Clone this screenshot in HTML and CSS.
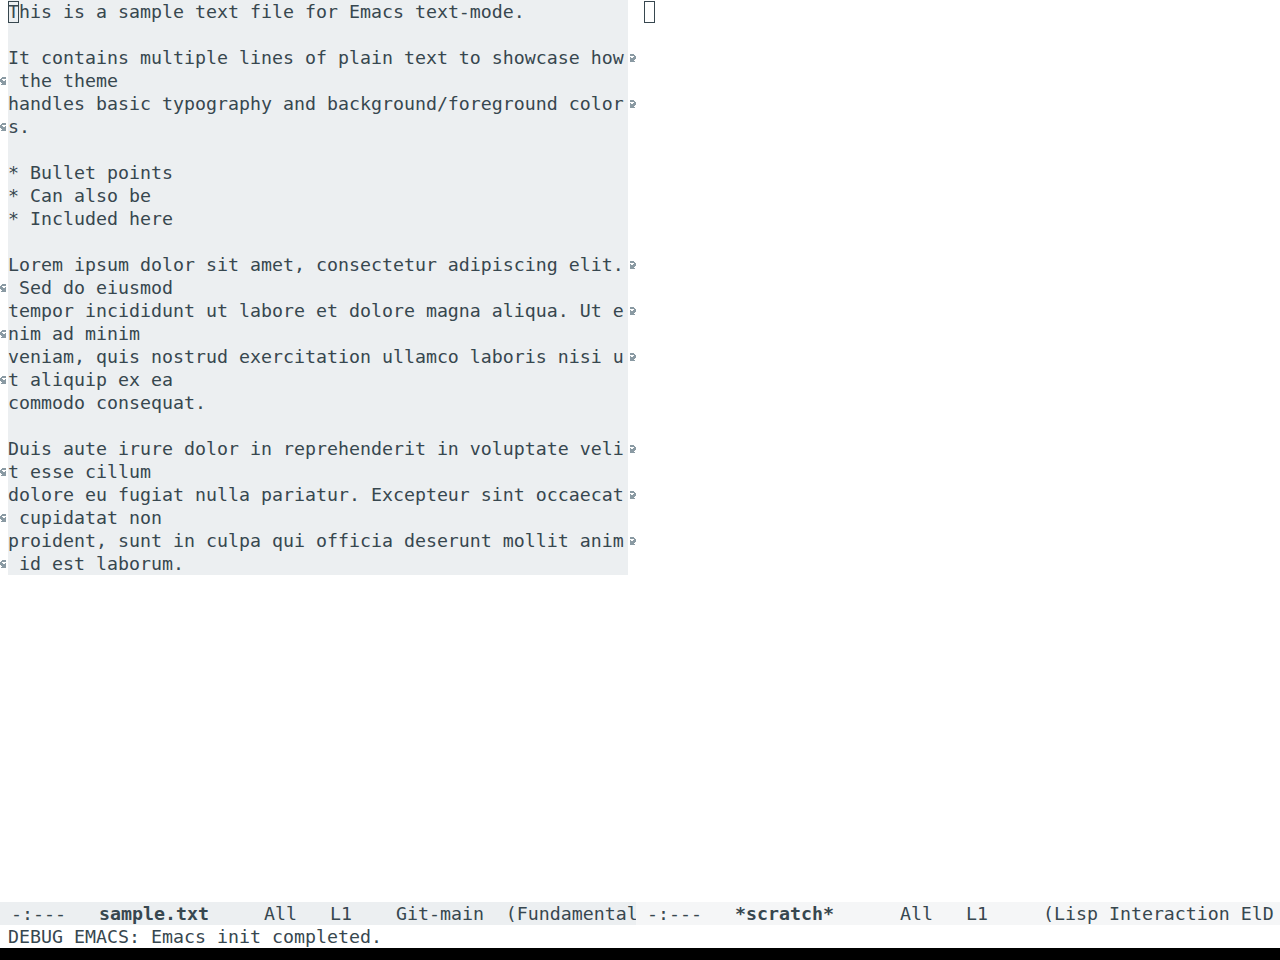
FILE: index.html
```html
<!DOCTYPE html>
<html>
<head>
<meta charset="utf-8">
<link rel="stylesheet" href="styles.css">
</head>
<body>
<div class="frame">
  <div class="windows">
    <div class="win win-left">
      <div class="row"><span class="fringe"></span><span class="text"><span class="cursor">T</span>his is a sample text file for Emacs text-mode.</span><span class="fringe"></span></div>
      <div class="row"><span class="fringe"></span><span class="text"></span><span class="fringe"></span></div>
      <div class="row"><span class="fringe"></span><span class="text">It contains multiple lines of plain text to showcase how</span><span class="fringe"><svg class="arr" viewBox="0 0 8 8" width="8" height="8"><path d="M2 0h4v1H2zM2 1h5v1H2zM6 2h2v1H6zM2 3h1v1H2zM5 3h3v1H5zM2 4h6v1H2zM2 5h5v1H2zM2 6h4v1H2zM2 7h5v1H2z"/></svg></span></div>
      <div class="row"><span class="fringe"><svg class="arr" viewBox="0 0 8 8" width="8" height="8"><path d="M2 0h4v1H2zM1 1h5v1H1zM0 2h2v1H0zM0 3h3v1H0zM5 3h1v1H5zM0 4h6v1H0zM1 5h5v1H1zM2 6h4v1H2zM1 7h5v1H1z"/></svg></span><span class="text"> the theme</span><span class="fringe"></span></div>
      <div class="row"><span class="fringe"></span><span class="text">handles basic typography and background/foreground color</span><span class="fringe"><svg class="arr" viewBox="0 0 8 8" width="8" height="8"><path d="M2 0h4v1H2zM2 1h5v1H2zM6 2h2v1H6zM2 3h1v1H2zM5 3h3v1H5zM2 4h6v1H2zM2 5h5v1H2zM2 6h4v1H2zM2 7h5v1H2z"/></svg></span></div>
      <div class="row"><span class="fringe"><svg class="arr" viewBox="0 0 8 8" width="8" height="8"><path d="M2 0h4v1H2zM1 1h5v1H1zM0 2h2v1H0zM0 3h3v1H0zM5 3h1v1H5zM0 4h6v1H0zM1 5h5v1H1zM2 6h4v1H2zM1 7h5v1H1z"/></svg></span><span class="text">s.</span><span class="fringe"></span></div>
      <div class="row"><span class="fringe"></span><span class="text"></span><span class="fringe"></span></div>
      <div class="row"><span class="fringe"></span><span class="text">* Bullet points</span><span class="fringe"></span></div>
      <div class="row"><span class="fringe"></span><span class="text">* Can also be</span><span class="fringe"></span></div>
      <div class="row"><span class="fringe"></span><span class="text">* Included here</span><span class="fringe"></span></div>
      <div class="row"><span class="fringe"></span><span class="text"></span><span class="fringe"></span></div>
      <div class="row"><span class="fringe"></span><span class="text">Lorem ipsum dolor sit amet, consectetur adipiscing elit.</span><span class="fringe"><svg class="arr" viewBox="0 0 8 8" width="8" height="8"><path d="M2 0h4v1H2zM2 1h5v1H2zM6 2h2v1H6zM2 3h1v1H2zM5 3h3v1H5zM2 4h6v1H2zM2 5h5v1H2zM2 6h4v1H2zM2 7h5v1H2z"/></svg></span></div>
      <div class="row"><span class="fringe"><svg class="arr" viewBox="0 0 8 8" width="8" height="8"><path d="M2 0h4v1H2zM1 1h5v1H1zM0 2h2v1H0zM0 3h3v1H0zM5 3h1v1H5zM0 4h6v1H0zM1 5h5v1H1zM2 6h4v1H2zM1 7h5v1H1z"/></svg></span><span class="text"> Sed do eiusmod</span><span class="fringe"></span></div>
      <div class="row"><span class="fringe"></span><span class="text">tempor incididunt ut labore et dolore magna aliqua. Ut e</span><span class="fringe"><svg class="arr" viewBox="0 0 8 8" width="8" height="8"><path d="M2 0h4v1H2zM2 1h5v1H2zM6 2h2v1H6zM2 3h1v1H2zM5 3h3v1H5zM2 4h6v1H2zM2 5h5v1H2zM2 6h4v1H2zM2 7h5v1H2z"/></svg></span></div>
      <div class="row"><span class="fringe"><svg class="arr" viewBox="0 0 8 8" width="8" height="8"><path d="M2 0h4v1H2zM1 1h5v1H1zM0 2h2v1H0zM0 3h3v1H0zM5 3h1v1H5zM0 4h6v1H0zM1 5h5v1H1zM2 6h4v1H2zM1 7h5v1H1z"/></svg></span><span class="text">nim ad minim</span><span class="fringe"></span></div>
      <div class="row"><span class="fringe"></span><span class="text">veniam, quis nostrud exercitation ullamco laboris nisi u</span><span class="fringe"><svg class="arr" viewBox="0 0 8 8" width="8" height="8"><path d="M2 0h4v1H2zM2 1h5v1H2zM6 2h2v1H6zM2 3h1v1H2zM5 3h3v1H5zM2 4h6v1H2zM2 5h5v1H2zM2 6h4v1H2zM2 7h5v1H2z"/></svg></span></div>
      <div class="row"><span class="fringe"><svg class="arr" viewBox="0 0 8 8" width="8" height="8"><path d="M2 0h4v1H2zM1 1h5v1H1zM0 2h2v1H0zM0 3h3v1H0zM5 3h1v1H5zM0 4h6v1H0zM1 5h5v1H1zM2 6h4v1H2zM1 7h5v1H1z"/></svg></span><span class="text">t aliquip ex ea</span><span class="fringe"></span></div>
      <div class="row"><span class="fringe"></span><span class="text">commodo consequat.</span><span class="fringe"></span></div>
      <div class="row"><span class="fringe"></span><span class="text"></span><span class="fringe"></span></div>
      <div class="row"><span class="fringe"></span><span class="text">Duis aute irure dolor in reprehenderit in voluptate veli</span><span class="fringe"><svg class="arr" viewBox="0 0 8 8" width="8" height="8"><path d="M2 0h4v1H2zM2 1h5v1H2zM6 2h2v1H6zM2 3h1v1H2zM5 3h3v1H5zM2 4h6v1H2zM2 5h5v1H2zM2 6h4v1H2zM2 7h5v1H2z"/></svg></span></div>
      <div class="row"><span class="fringe"><svg class="arr" viewBox="0 0 8 8" width="8" height="8"><path d="M2 0h4v1H2zM1 1h5v1H1zM0 2h2v1H0zM0 3h3v1H0zM5 3h1v1H5zM0 4h6v1H0zM1 5h5v1H1zM2 6h4v1H2zM1 7h5v1H1z"/></svg></span><span class="text">t esse cillum</span><span class="fringe"></span></div>
      <div class="row"><span class="fringe"></span><span class="text">dolore eu fugiat nulla pariatur. Excepteur sint occaecat</span><span class="fringe"><svg class="arr" viewBox="0 0 8 8" width="8" height="8"><path d="M2 0h4v1H2zM2 1h5v1H2zM6 2h2v1H6zM2 3h1v1H2zM5 3h3v1H5zM2 4h6v1H2zM2 5h5v1H2zM2 6h4v1H2zM2 7h5v1H2z"/></svg></span></div>
      <div class="row"><span class="fringe"><svg class="arr" viewBox="0 0 8 8" width="8" height="8"><path d="M2 0h4v1H2zM1 1h5v1H1zM0 2h2v1H0zM0 3h3v1H0zM5 3h1v1H5zM0 4h6v1H0zM1 5h5v1H1zM2 6h4v1H2zM1 7h5v1H1z"/></svg></span><span class="text"> cupidatat non</span><span class="fringe"></span></div>
      <div class="row"><span class="fringe"></span><span class="text">proident, sunt in culpa qui officia deserunt mollit anim</span><span class="fringe"><svg class="arr" viewBox="0 0 8 8" width="8" height="8"><path d="M2 0h4v1H2zM2 1h5v1H2zM6 2h2v1H6zM2 3h1v1H2zM5 3h3v1H5zM2 4h6v1H2zM2 5h5v1H2zM2 6h4v1H2zM2 7h5v1H2z"/></svg></span></div>
      <div class="row"><span class="fringe"><svg class="arr" viewBox="0 0 8 8" width="8" height="8"><path d="M2 0h4v1H2zM1 1h5v1H1zM0 2h2v1H0zM0 3h3v1H0zM5 3h1v1H5zM0 4h6v1H0zM1 5h5v1H1zM2 6h4v1H2zM1 7h5v1H1z"/></svg></span><span class="text"> id est laborum.</span><span class="fringe"></span></div>
    </div>
    <div class="win win-right">
      <div class="row"><span class="fringe"></span><span class="text-plain"><span class="cursor empty"> </span></span></div>
    </div>
  </div>
  <div class="modelines">
    <div class="modeline active"> -:---   <b>sample.txt</b>     All   L1    Git-main  (Fundamental</div>
    <div class="modeline inactive"> -:---   <b>*scratch*</b>      All   L1     (Lisp Interaction ElD</div>
  </div>
  <div class="echo">DEBUG EMACS: Emacs init completed.</div>
  <div class="bottom"></div>
</div>
</body>
</html>
```
FILE: styles.css
```css
html, body {
  margin: 0;
  padding: 0;
  background: #ffffff;
}
body {
  font-family: "DejaVu Sans Mono", monospace;
  font-size: 18.27px;
  line-height: 23px;
  color: #37474f;
}
.frame {
  width: 1280px;
  height: 960px;
  display: flex;
  flex-direction: column;
  overflow: hidden;
}
.windows {
  height: 902px;
  display: flex;
}
.win-left {
  width: 636px;
  flex: none;
}
.win-right {
  flex: 1;
}
.row {
  display: flex;
  height: 23px;
  align-items: center;
}
.fringe {
  width: 8px;
  height: 23px;
  flex: none;
  display: flex;
  align-items: center;
}
.arr {
  display: block;
  fill: #8a9aa3;
  shape-rendering: crispEdges;
}
.text {
  width: 620px;
  height: 23px;
  flex: none;
  background: #eceff1;
  white-space: pre;
  overflow: hidden;
}
.text-plain {
  height: 23px;
  white-space: pre;
}
.cursor {
  display: inline-block;
  width: 11px;
  height: 22px;
  margin-top: 1px;
  line-height: 21px;
  vertical-align: top;
  box-shadow: inset 0 0 0 1px #37474f;
}
.modelines {
  height: 23px;
  display: flex;
}
.modeline {
  height: 23px;
  white-space: pre;
}
.modeline b {
  font-weight: bold;
}
.active {
  width: 636px;
  flex: none;
  background: #eceff1;
}
.inactive {
  flex: 1;
  background: #f5f6f7;
  overflow: hidden;
}
.echo {
  height: 23px;
  padding-left: 8px;
  white-space: pre;
}
.bottom {
  flex: 1;
  background: #000000;
}
```
